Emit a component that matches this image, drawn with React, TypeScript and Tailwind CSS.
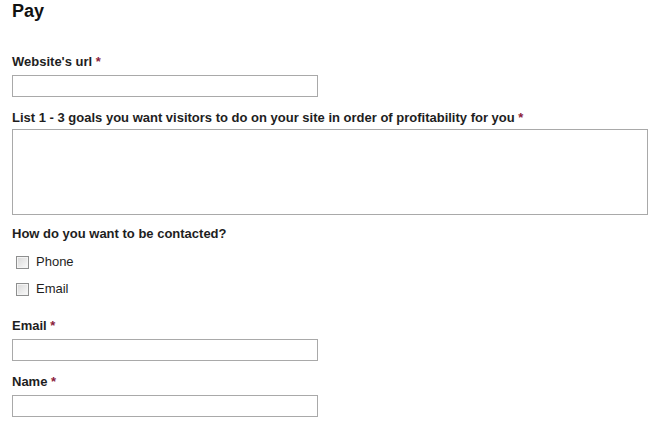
import { useState } from 'react'

const fieldClass = 'block h-[22px] w-[306px] border border-[#a9a9a9] bg-white px-1 text-[13px] outline-none'

function Label({ text, required }: { text: string; required?: boolean }) {
  return (
    <label className="block text-[13px] font-bold leading-4 text-[#1e1e1e]">
      {text}
      {required && <span className="text-[#8b1c3c]"> *</span>}
    </label>
  )
}

function Check({ label }: { label: string }) {
  const [checked, setChecked] = useState(false)
  return (
    <label className="flex h-4 items-center gap-[7px] pl-1 text-[13px] leading-4 text-[#1e1e1e]">
      <input
        type="checkbox"
        checked={checked}
        onChange={() => setChecked(!checked)}
        className="m-0 h-[13px] w-[13px] shrink-0 appearance-none border border-[#8e8f8f] bg-gradient-to-br from-[#d8d8d8] to-[#fbfbfb] shadow-[inset_0_0_0_1px_#f4f4f4]"
      />
      {label}
    </label>
  )
}

export default function App() {
  return (
    <div className="min-h-[429px] w-[669px] bg-white px-3 font-['Liberation_Sans',Arial,sans-serif] text-[#1e1e1e]">
      <h1 className="pt-[1px] text-[18px] font-bold leading-5 text-[#111]">Pay</h1>

      <div className="pt-[33px]">
        <Label text="Website's url" required />
        <input type="text" className={`${fieldClass} mt-[5px]`} />
      </div>

      <div className="pt-[13px]">
        <Label text="List 1 - 3 goals you want visitors to do on your site in order of profitability for you" required />
        <textarea className="mt-[3px] block h-[86px] w-[636px] resize-none border border-[#a9a9a9] bg-white p-1 text-[13px] outline-none" />
      </div>

      <div className="pt-[11px]">
        <Label text="How do you want to be contacted?" />
        <div className="flex flex-col gap-[11px] pt-[12px]">
          <Check label="Phone" />
          <Check label="Email" />
        </div>
      </div>

      <div className="pt-[21px]">
        <Label text="Email" required />
        <input type="text" className={`${fieldClass} mt-[5px]`} />
      </div>

      <div className="pt-[13px]">
        <Label text="Name" required />
        <input type="text" className={`${fieldClass} mt-[5px]`} />
      </div>
    </div>
  )
}
